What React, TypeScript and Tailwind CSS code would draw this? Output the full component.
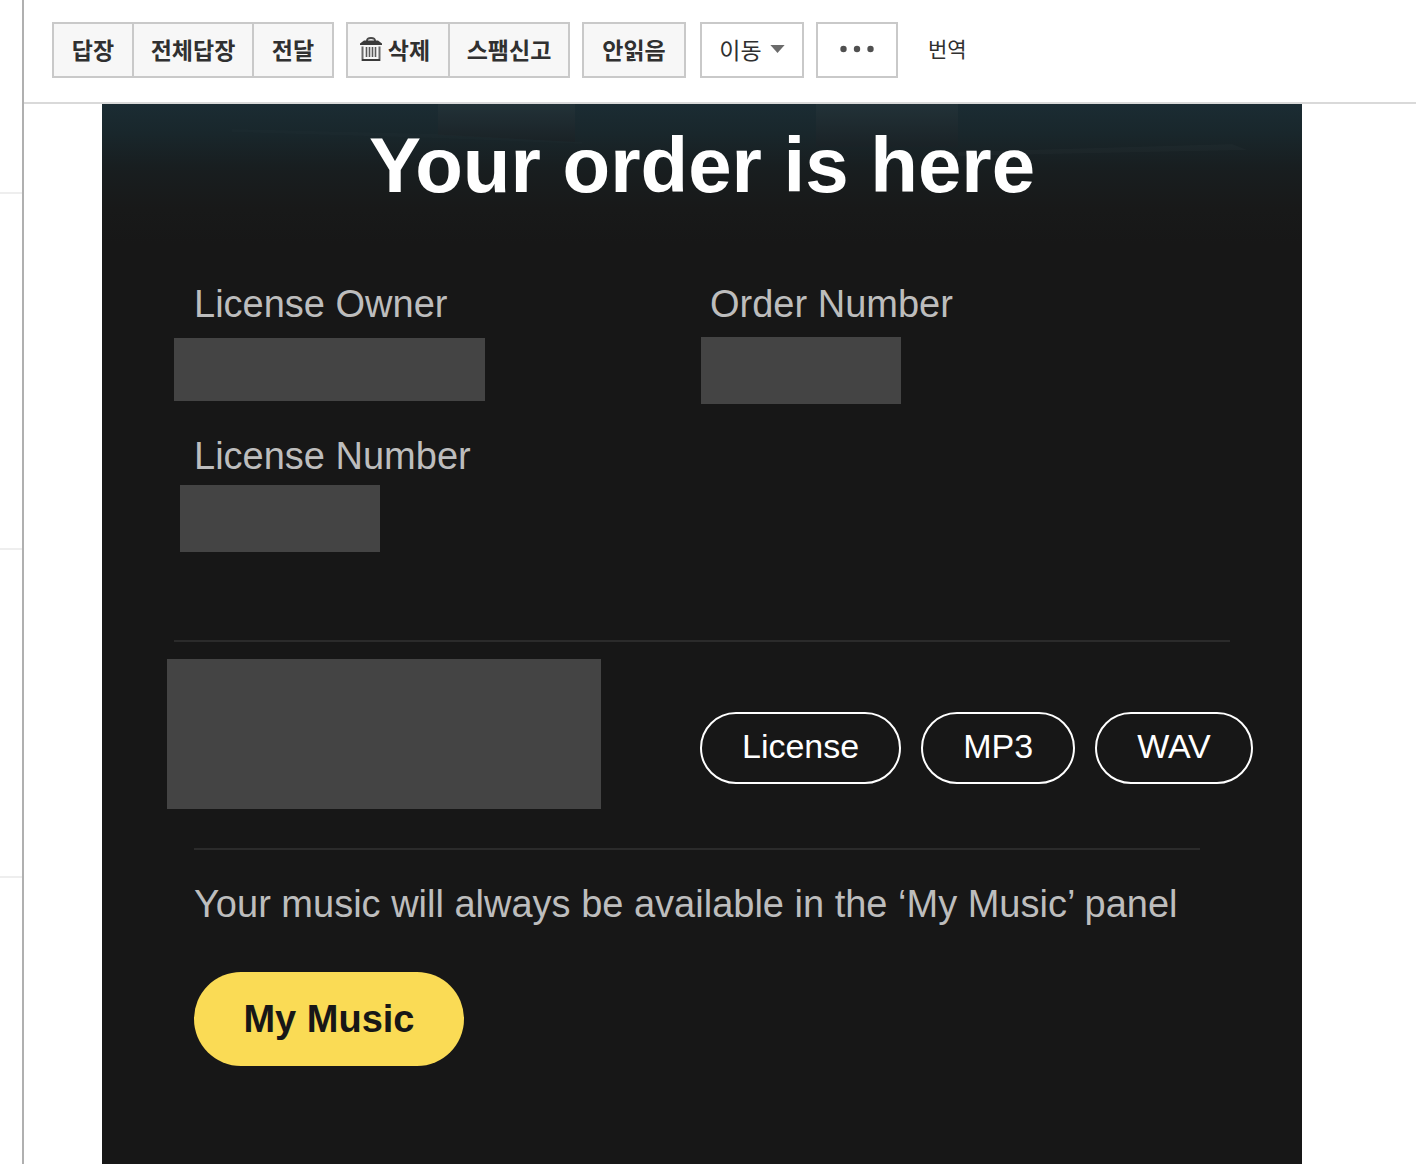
import type { ReactNode } from "react";

const toolButton =
  "flex h-14 items-center justify-center border-2 border-[#c9c9c9] bg-[#f7f7f7] pb-0.5 text-[23px] leading-none font-bold whitespace-nowrap text-[#303030]";

function TrashIcon() {
  return (
    <svg width="22" height="24" viewBox="0 0 22 24" aria-hidden="true" fill="none">
      <path d="M7 4C7 1.600 8 1 11 1s4 .6 4 3" stroke="#4a4a4a" strokeWidth="2" />
      <path d="M4 3.500h14l4 3V8H0V6.500z" fill="#3a3a3a" />
      <path d="M2.500 9.500V23h17V9.500" stroke="#6a6a6a" strokeWidth="2" />
      <path d="M2 23h18" stroke="#3a3a3a" strokeWidth="2" />
      <path d="M6.500 10v10M9.500 10v10M12.500 10v10M15.500 10v10" stroke="#5a5a5a" strokeWidth="1.600" />
    </svg>
  );
}

function Toolbar() {
  return (
    <header className="flex h-[104px] items-center border-b-2 border-[#d9d9d9] pb-0.5 pl-7">
      <div className="flex">
        <button className={`${toolButton} w-[82px]`}>답장</button>
        <button className={`${toolButton} -ml-0.5 w-[122px]`}>전체답장</button>
        <button className={`${toolButton} -ml-0.5 w-[82px]`}>전달</button>
      </div>
      <div className="ml-3 flex">
        <button className={`${toolButton} w-[104px] gap-1.5 pr-1.5`}>
          <TrashIcon />
          삭제
        </button>
        <button className={`${toolButton} -ml-0.5 w-[122px]`}>스팸신고</button>
      </div>
      <button className={`${toolButton} ml-3 w-[104px]`}>안읽음</button>
      <button className="ml-3.5 flex h-14 w-[104px] items-center justify-center gap-2 border-2 border-[#c9c9c9] bg-white pb-0.5 text-[23px] leading-none text-[#303030]">
        이동
        <svg width="15" height="8" viewBox="0 0 16 9" aria-hidden="true">
          <path d="M0 0h16L8 9z" fill="#6b6b6b" />
        </svg>
      </button>
      <button
        aria-label="더보기"
        className="ml-3 flex h-14 w-[82px] items-center justify-center border-2 border-[#c9c9c9] bg-white pb-0.5"
      >
        <svg width="36" height="8" viewBox="0 0 36 8" aria-hidden="true" fill="#505050">
          <circle cx="4.500" cy="4" r="3.200" />
          <circle cx="18" cy="4" r="3.200" />
          <circle cx="31.500" cy="4" r="3.200" />
        </svg>
      </button>
      <button className="ml-[30px] pb-1 text-[21px] leading-none text-[#303030]">번역</button>
    </header>
  );
}

function HeroBackdrop() {
  return (
    <svg
      className="absolute inset-0 h-full w-full"
      viewBox="0 0 1200 140"
      preserveAspectRatio="none"
      aria-hidden="true"
    >
      <defs>
        <linearGradient id="shade" x1="0" y1="0" x2="0" y2="1">
          <stop offset="0" stopColor="#1b2c33" />
          <stop offset="0.200" stopColor="#19272c" />
          <stop offset="0.450" stopColor="#181e20" />
          <stop offset="0.750" stopColor="#181919" />
          <stop offset="1" stopColor="#171717" />
        </linearGradient>
        <linearGradient id="pane" x1="0" y1="0" x2="0" y2="1">
          <stop offset="0" stopColor="#223238" />
          <stop offset="1" stopColor="#1a2226" />
        </linearGradient>
      </defs>
      <rect width="1200" height="140" fill="url(#shade)" />
      <path d="M336 0h137v38L336 31z" fill="url(#pane)" />
      <path d="M714 0h142v43H714z" fill="url(#pane)" />
      <path d="M130 25L336 30L480 38V40L330 34L130 28z" fill="#fff" opacity="0.012" />
      <path d="M856 48L1130 40L1145 46L856 52z" fill="#fff" opacity="0.02" />
    </svg>
  );
}

function Label({ children }: { children: ReactNode }) {
  return <h2 className="text-[38px] leading-[44px] whitespace-nowrap text-[#bdbdbd]">{children}</h2>;
}

function Download({ children }: { children: ReactNode }) {
  return (
    <a
      href="#"
      className="flex h-[72px] items-center justify-center rounded-full border-2 border-white px-10 pb-1 text-[34px] leading-none text-white"
    >
      {children}
    </a>
  );
}

function Mail() {
  return (
    <article className="mr-[114px] ml-[78px] flex-1 bg-[#171717] font-['Liberation_Sans',Arial,sans-serif]">
      <div className="relative h-[140px] pt-4">
        <HeroBackdrop />
        <h1 className="relative text-center text-[78px] leading-[90px] font-bold text-white">
          Your order is here
        </h1>
      </div>

      <section className="grid grid-cols-2 pt-[38px] pr-1">
        <div>
          <div className="pl-[92px]">
            <Label>License Owner</Label>
          </div>
          <div className="mt-3 ml-[72px] h-[63px] w-[311px] bg-[#444]" />
          <div className="mt-[33px] pl-[92px]">
            <Label>License Number</Label>
          </div>
          <div className="mt-[7px] ml-[78px] h-[67px] w-[200px] bg-[#444]" />
        </div>
        <div>
          <div className="pl-2.5">
            <Label>Order Number</Label>
          </div>
          <div className="mt-[11px] ml-px h-[67px] w-[200px] bg-[#444]" />
        </div>
      </section>

      <hr className="mx-[72px] mt-[88px] border-t-2 border-[#2b2b2b]" />

      <section className="mt-[17px] grid grid-cols-2 pr-1">
        <div className="ml-[65px] h-[150px] w-[434px] bg-[#444]" />
        <div className="flex gap-5 pt-[53px]">
          <Download>License</Download>
          <Download>MP3</Download>
          <Download>WAV</Download>
        </div>
      </section>

      <hr className="mt-[39px] mr-[102px] ml-[92px] border-t-2 border-[#2b2b2b]" />

      <section className="pt-8 pb-[98px] pl-[92px]">
        <p className="text-[38px] leading-[44px] text-[#bdbdbd]">
          Your music will always be available in the ‘My Music’ panel
        </p>
        <a
          href="#"
          className="mt-[46px] flex h-[94px] w-[270px] items-center justify-center rounded-full bg-[#fadb55] text-[38px] leading-none font-bold text-[#171717]"
        >
          My Music
        </a>
      </section>
    </article>
  );
}

export default function App() {
  return (
    <div className="flex min-h-screen bg-white font-['Noto_Sans_CJK_KR',sans-serif]">
      <aside className="w-6 shrink-0 border-r-2 border-[#b0b0b0]">
        <div className="h-[194px] border-b-2 border-[#eeeeee]" />
        <div className="h-[356px] border-b-2 border-[#eeeeee]" />
        <div className="h-[328px] border-b-2 border-[#eeeeee]" />
      </aside>
      <main className="flex min-w-0 flex-1 flex-col">
        <Toolbar />
        <Mail />
      </main>
    </div>
  );
}
